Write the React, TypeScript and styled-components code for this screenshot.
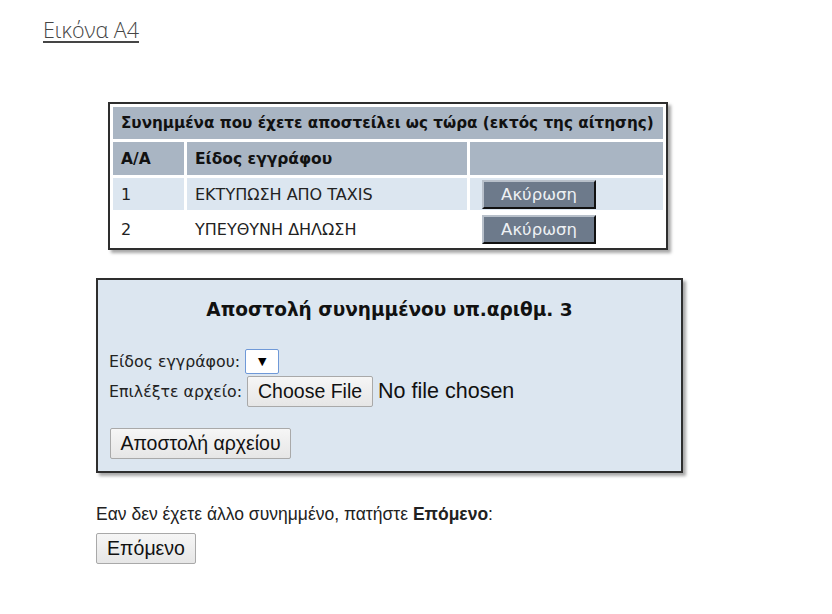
import React from 'react'
import styled, { createGlobalStyle } from 'styled-components'

const GlobalStyle = createGlobalStyle`
body {
    margin: 0;
    background: #ffffff;
    font-family: "DejaVu Sans", Verdana, sans-serif;
    color: #111;
}
`;

const Page = styled.div`
padding: 15px 0 40px 43px;
`;

const FigureLink = styled.a`
display: inline-block;
font-family: "Open Sans", sans-serif;
font-weight: 300;
font-size: 21.5px;
color: #454545;
text-decoration: underline;
text-decoration-thickness: 2px;
text-underline-offset: 3px;
`;

const AttachTable = styled.table`
margin: 58px 0 0 65px;
width: 560px;
border-collapse: separate;
border-spacing: 3px;
border: 2px solid #2e2e2e;
box-shadow: 3px 3px 3px rgba(0, 0, 0, 0.35);
`;

const TitleCell = styled.th`
background: #a9b5c3;
height: 32px;
padding: 0 6px 0 8px;
text-align: left;
font-weight: bold;
font-size: 15.2px;
white-space: nowrap;
`;

const HeadCell = styled.th<{ $w?: number }>`
background: #a9b5c3;
height: 33px;
padding: 0 8px;
text-align: left;
font-weight: bold;
font-size: 15.5px;
width: ${p => (p.$w ? `${p.$w}px` : 'auto')};
`;

const Row = styled.tr<{ $shade: boolean }>`
background: ${p => (p.$shade ? '#dce6f0' : '#ffffff')};
`;

const Cell = styled.td`
height: 32px;
padding: 0 8px;
font-size: 16px;
color: #222;
white-space: nowrap;
`;

const CancelButton = styled.button`
width: 114px;
height: 29px;
margin-left: 4px;
padding: 0;
background: #6d7a8b;
color: #eef1f4;
font-family: "DejaVu Sans", Verdana, sans-serif;
font-size: 16.5px;
border: 2px solid;
border-color: #b8c0ca #111 #111 #b8c0ca;
cursor: pointer;
`;

const UploadBox = styled.div`
margin: 28px 0 0 53px;
width: 559px;
height: 191px;
background: #dce6f0;
border: 2px solid #2e2e2e;
box-shadow: 3px 3px 3px rgba(0, 0, 0, 0.35);
padding: 0 12px;
`;

const UploadTitle = styled.div`
text-align: center;
font-weight: bold;
font-size: 18.5px;
padding-top: 19px;
`;

const Fields = styled.div`
display: flex;
flex-direction: column;
gap: 2px;
margin-top: 29px;
width: fit-content;
margin-left: -1px;
`;

const FieldRow = styled.div`
display: flex;
align-items: center;
gap: 5px;
`;

const Label = styled.span`
font-size: 15.8px;
color: #222;
`;

const SelectBox = styled.span`
display: inline-flex;
align-items: center;
justify-content: center;
width: 32px;
height: 23px;
background: #fff;
border: 1px solid #6f99d8;
border-radius: 2px;
font-size: 11px;
color: #000;
`;

const FileRow = styled.div`
display: flex;
align-items: center;
gap: 5px;
font-family: "Liberation Sans", Arial, sans-serif;
font-size: 21.5px;
color: #111;
`;

const NativeButton = styled.button<{ $w: number }>`
width: ${p => p.$w}px;
height: 31px;
padding: 0;
background: linear-gradient(#f6f6f6, #e6e6e6);
border: 1px solid #a9a9a9;
border-radius: 2px;
font-family: "Liberation Sans", Arial, sans-serif;
font-size: 19.5px;
color: #111;
`;

const SendRow = styled.div`
margin-top: 21px;
`;

const Footer = styled.div`
margin: 31px 0 0 53px;
`;

const FooterText = styled.div`
font-family: "Liberation Sans", Arial, sans-serif;
font-size: 17.5px;
color: #222;
line-height: 20px;
margin-bottom: 9px;
`;

export default function App() {
    const rows = ['ΕΚΤΥΠΩΣΗ ΑΠΟ TAXIS', 'ΥΠΕΥΘΥΝΗ ΔΗΛΩΣΗ']
    return (
        <Page>
            <GlobalStyle />
            <FigureLink>Εικόνα A4</FigureLink>

            <AttachTable>
                <thead>
                    <tr>
                        <TitleCell colSpan={3}>Συνημμένα που έχετε αποστείλει ως τώρα (εκτός της αίτησης)</TitleCell>
                    </tr>
                    <tr>
                        <HeadCell $w={55}>A/A</HeadCell>
                        <HeadCell $w={264}>Είδος εγγράφου</HeadCell>
                        <HeadCell />
                    </tr>
                </thead>
                <tbody>
                    {rows.map((r, i) => (
                        <Row key={r} $shade={i % 2 === 0}>
                            <Cell>{i + 1}</Cell>
                            <Cell>{r}</Cell>
                            <Cell><CancelButton>Ακύρωση</CancelButton></Cell>
                        </Row>
                    ))}
                </tbody>
            </AttachTable>

            <UploadBox>
                <UploadTitle>Αποστολή συνημμένου υπ.αριθμ. 3</UploadTitle>
                <Fields>
                    <FieldRow>
                        <Label>Είδος εγγράφου:</Label>
                        <SelectBox>▼</SelectBox>
                    </FieldRow>
                    <FieldRow>
                        <Label>Επιλέξτε αρχείο:</Label>
                        <FileRow>
                            <NativeButton $w={126}>Choose File</NativeButton>
                            <span>No file chosen</span>
                        </FileRow>
                    </FieldRow>
                </Fields>
                <SendRow>
                    <NativeButton $w={181}>Αποστολή αρχείου</NativeButton>
                </SendRow>
            </UploadBox>

            <Footer>
                <FooterText>Εαν δεν έχετε άλλο συνημμένο, πατήστε <b>Επόμενο</b>:</FooterText>
                <NativeButton $w={100}>Επόμενο</NativeButton>
            </Footer>
        </Page>
    )
}
